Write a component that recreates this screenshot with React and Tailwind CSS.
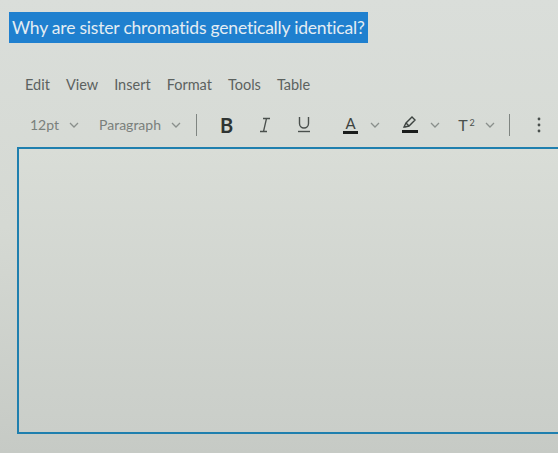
import React from "react";

const Chevron = ({ className = "" }) => (
  <svg width="10" height="6" viewBox="0 0 10 6" className={className} fill="none" stroke="#8a8f8c" strokeWidth="1.3">
    <path d="M1 1l4 4 4-4" />
  </svg>
);

const Divider = () => <div className="w-px h-[22px] bg-[#7f8581]" />;

export default function App() {
  const menu = ["Edit", "View", "Insert", "Format", "Tools", "Table"];

  return (
    <div
      className="w-[558px] h-[453px] overflow-hidden bg-gradient-to-b from-[#dadeda] via-[#d5d9d3] to-[#c6cac5] text-[#555b58]"
      style={{ fontFamily: "Lato, 'Open Sans', sans-serif" }}
    >
      {/* question title */}
      <div className="pt-[12px] pl-[9px]">
        <span className="inline-block bg-[#1f80cf] text-[#e4edf3] text-[17.5px] leading-[31px] px-[3px] tracking-[-0.2px]">
          Why are sister chromatids genetically identical?
        </span>
      </div>

      {/* menu bar */}
      <div className="flex items-center gap-[16px] pl-[25px] mt-[31px] text-[14.5px] text-[#5c625f]">
        {menu.map((m) => (
          <span key={m}>{m}</span>
        ))}
      </div>

      {/* toolbar */}
      <div className="flex items-center h-[30px] mt-[14px] pl-[30px] text-[14px] text-[#7a807c]">
        <span>12pt</span>
        <Chevron className="ml-[10px]" />
        <span className="ml-[20px]">Paragraph</span>
        <Chevron className="ml-[10px]" />
        <div className="ml-[15px]">
          <Divider />
        </div>
        <span className="ml-[23px] text-[20px] font-bold text-[#2f3432]">B</span>
        <svg width="12" height="16" viewBox="0 0 12 16" className="ml-[26px]" fill="none" stroke="#4a504d" strokeWidth="1.3">
          <path d="M4 1.5h7M1 14.5h7M7.5 1.5L4.5 14.5" />
        </svg>
        <svg width="14" height="17" viewBox="0 0 14 17" className="ml-[26px]" fill="none" stroke="#4a504d" strokeWidth="1.4">
          <path d="M2.5 1v6.5a4.5 4.5 0 009 0V1" />
          <path d="M1 15.5h12" />
        </svg>
        <div className="ml-[32px] flex flex-col items-center">
          <span className="text-[15px] leading-[14px] text-[#3d4340]">A</span>
          <div className="w-[15px] h-[3px] bg-[#1a1d1c] mt-[1px]" />
        </div>
        <Chevron className="ml-[12px]" />
        <div className="ml-[22px] flex flex-col items-center">
          <svg width="16" height="13" viewBox="0 0 16 13" fill="none" stroke="#3d4340" strokeWidth="1.4">
            <path d="M2 11l2-4 6-6 3 3-6 6-4 1z" />
            <path d="M4 7l3 3" />
          </svg>
          <div className="w-[16px] h-[3px] bg-[#1a1d1c] mt-[1px]" />
        </div>
        <Chevron className="ml-[12px]" />
        <span className="ml-[18px] text-[16px] text-[#4a504d] relative">
          T<sup className="text-[9px] ml-[2px]">2</sup>
        </span>
        <Chevron className="ml-[10px]" />
        <div className="ml-[14px]">
          <Divider />
        </div>
        <svg width="4" height="16" viewBox="0 0 4 16" className="ml-[27px]" fill="#4a504d">
          <circle cx="2" cy="2" r="1.4" />
          <circle cx="2" cy="8" r="1.4" />
          <circle cx="2" cy="14" r="1.4" />
        </svg>
      </div>

      {/* editor area */}
      <div className="ml-[17px] mt-[7px] w-[560px] h-[287px] border-2 border-[#1f7fae] bg-gradient-to-b from-[#d9ddd7] to-[#cacec9]" />
    </div>
  );
}
